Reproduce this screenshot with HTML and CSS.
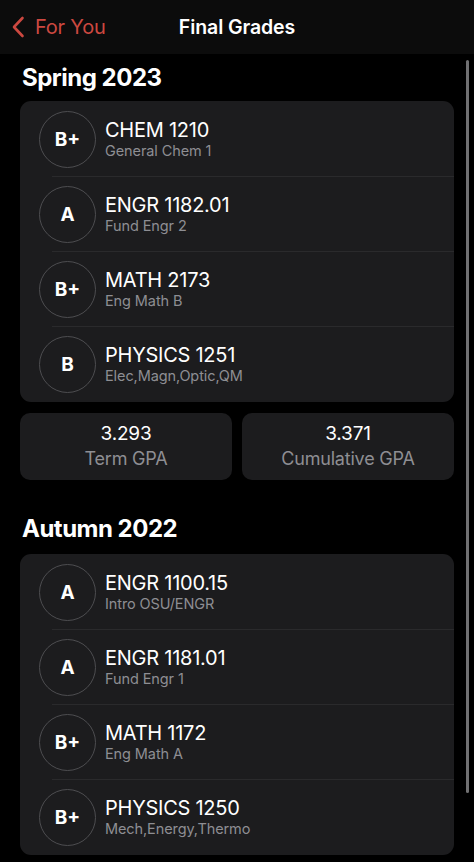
FILE: index.html
```html
<!DOCTYPE html>
<html lang="en">
<head>
<meta charset="utf-8">
<title>Final Grades</title>
<link rel="stylesheet" href="styles.css">
</head>
<body>
<header class="nav">
  <a class="back" href="#">
    <svg class="chev" width="14" height="22" viewBox="0 0 14 22"><path d="M11.5 2 L3 11 L11.5 20" fill="none" stroke="currentColor" stroke-width="2.6" stroke-linecap="round" stroke-linejoin="round"/></svg>
    <span>For You</span>
  </a>
  <h1 class="title">Final Grades</h1>
  <span></span>
</header>
<main class="content">
  <h2 class="term">Spring 2023</h2>
  <section class="card">
    <div class="row"><div class="grade">B+</div><div class="info"><div class="code">CHEM 1210</div><div class="name">General Chem 1</div></div></div>
    <div class="sep"></div>
    <div class="row"><div class="grade">A</div><div class="info"><div class="code">ENGR 1182.01</div><div class="name">Fund Engr 2</div></div></div>
    <div class="sep"></div>
    <div class="row"><div class="grade">B+</div><div class="info"><div class="code">MATH 2173</div><div class="name">Eng Math B</div></div></div>
    <div class="sep"></div>
    <div class="row"><div class="grade">B</div><div class="info"><div class="code">PHYSICS 1251</div><div class="name">Elec,Magn,Optic,QM</div></div></div>
  </section>
  <section class="gpas">
    <div class="gpa"><div class="val">3.293</div><div class="lbl">Term GPA</div></div>
    <div class="gpa"><div class="val">3.371</div><div class="lbl">Cumulative GPA</div></div>
  </section>
  <h2 class="term term2">Autumn 2022</h2>
  <section class="card">
    <div class="row"><div class="grade">A</div><div class="info"><div class="code">ENGR 1100.15</div><div class="name">Intro OSU/ENGR</div></div></div>
    <div class="sep"></div>
    <div class="row"><div class="grade">A</div><div class="info"><div class="code">ENGR 1181.01</div><div class="name">Fund Engr 1</div></div></div>
    <div class="sep"></div>
    <div class="row"><div class="grade">B+</div><div class="info"><div class="code">MATH 1172</div><div class="name">Eng Math A</div></div></div>
    <div class="sep"></div>
    <div class="row"><div class="grade">B+</div><div class="info"><div class="code">PHYSICS 1250</div><div class="name">Mech,Energy,Thermo</div></div></div>
  </section>
</main>
<div class="scrollbar"></div>
</body>
</html>
```
FILE: styles.css
```css
html, body {
  margin: 0;
  padding: 0;
  background: #000;
  color: #fff;
  font-family: Inter, "Noto Sans", sans-serif;
  height: 862px;
  overflow: hidden;
}
.nav {
  height: 54px;
  background: #0c0c0c;
  display: grid;
  grid-template-columns: 1fr auto 1fr;
  align-items: center;
}
.back {
  display: flex;
  align-items: center;
  gap: 10px;
  padding-left: 11px;
  color: #cc4840;
  text-decoration: none;
  font-size: 20px;
  letter-spacing: -0.2px;
}
.chev { display: block; }
.title {
  margin: 0;
  font-size: 19.5px;
  font-weight: 600;
  letter-spacing: -0.1px;
}
.content {
  padding: 0 20px;
}
.term {
  margin: 9px 0 8px 2px;
  font-size: 24px;
  line-height: 30px;
  font-weight: 650;
  letter-spacing: -0.5px;
}
.term2 {
  margin-top: 34px;
  margin-bottom: 10px;
}
.card {
  background: #1c1c1e;
  border-radius: 11px;
  padding: 1px 0;
}
.row {
  height: 74px;
  display: flex;
  align-items: center;
  padding-left: 19px;
  gap: 9px;
}
.sep {
  height: 1px;
  margin-left: 32px;
  background: #2a2a2c;
}
.grade {
  width: 55px;
  height: 55px;
  border: 1px solid #4d4d50;
  border-radius: 50%;
  display: flex;
  align-items: center;
  justify-content: center;
  font-size: 19px;
  font-weight: 700;
  flex: none;
}
.info {
  display: flex;
  flex-direction: column;
}
.code {
  font-size: 20px;
  line-height: 22px;
  letter-spacing: -0.25px;
}
.name {
  font-size: 14.5px;
  line-height: 18px;
  margin-top: 1px;
  color: #8e8e93;
  letter-spacing: -0.1px;
}
.gpas {
  margin-top: 11px;
  display: grid;
  grid-template-columns: 1fr 1fr;
  gap: 10px;
}
.gpa {
  height: 67px;
  background: #1c1c1e;
  border-radius: 10px;
  display: flex;
  flex-direction: column;
  align-items: center;
  padding-top: 9px;
  box-sizing: border-box;
}
.val {
  font-size: 19px;
  line-height: 24px;
  letter-spacing: -0.2px;
}
.lbl {
  font-size: 18px;
  line-height: 26px;
  color: #8e8e93;
  letter-spacing: -0.2px;
}
.scrollbar {
  position: absolute;
  top: 60px;
  left: 466px;
  width: 3px;
  height: 733px;
  border-radius: 2px;
  background: #707072;
}
```
